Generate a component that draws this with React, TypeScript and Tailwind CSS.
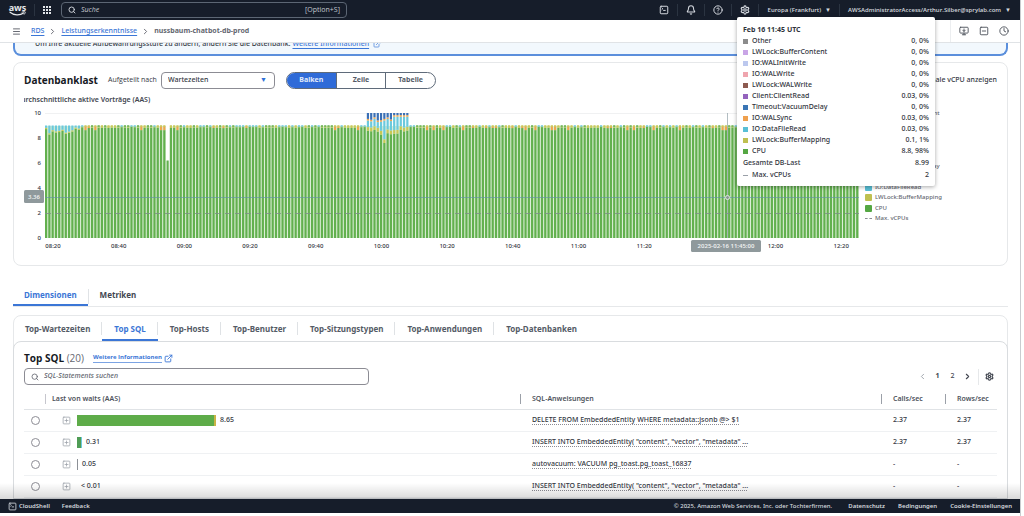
import React from "react";
import {
  Bell,
  ChevronLeft,
  ChevronRight,
  CircleHelp,
  Clock4,
  ExternalLink,
  Menu,
  MonitorDown,
  Search,
  Settings,
  SquareMinus,
  SquarePlus,
  SquareTerminal,
} from "lucide-react";

const GREEN = "#62b04e";
const YELLOW = "#c6c855";
const CYAN = "#6bc9dc";
const ORANGE = "#eda64e";
const BLUE = "#3a6fb5";

const metrics = [
  { name: "Other", value: "0, 0%", swatch: "bg-[#8c8c8c]" },
  { name: "LWLock:BufferContent", value: "0, 0%", swatch: "bg-[#c9a5e6]" },
  { name: "IO:WALInitWrite", value: "0, 0%", swatch: "bg-[#bcc8ee]" },
  { name: "IO:WALWrite", value: "0, 0%", swatch: "bg-[#efa5ae]" },
  { name: "LWLock:WALWrite", value: "0, 0%", swatch: "bg-[#8d5a50]" },
  { name: "Client:ClientRead", value: "0.03, 0%", swatch: "bg-[#9463bd]" },
  { name: "Timeout:VacuumDelay", value: "0, 0%", swatch: "bg-[#3a75b5]" },
  { name: "IO:WALSync", value: "0.03, 0%", swatch: "bg-[#efa04d]" },
  { name: "IO:DataFileRead", value: "0.03, 0%", swatch: "bg-[#58bfd6]" },
  { name: "LWLock:BufferMapping", value: "0.1, 1%", swatch: "bg-[#bfc050]" },
  { name: "CPU", value: "8.8, 98%", swatch: "bg-[#55a743]" },
];

const dimensionTabs = [
  "Top-Wartezeiten",
  "Top SQL",
  "Top-Hosts",
  "Top-Benutzer",
  "Top-Sitzungstypen",
  "Top-Anwendungen",
  "Top-Datenbanken",
];

const timeLabels = [
  { text: "08:20", minute: 0 },
  { text: "08:40", minute: 20 },
  { text: "09:00", minute: 40 },
  { text: "09:20", minute: 60 },
  { text: "09:40", minute: 80 },
  { text: "10:00", minute: 100 },
  { text: "10:20", minute: 120 },
  { text: "10:40", minute: 140 },
  { text: "11:00", minute: 160 },
  { text: "11:20", minute: 180 },
  { text: "12:00", minute: 220 },
  { text: "12:20", minute: 240 },
];

const statements = [
  { load: "8.65", bar: 139, kind: "cpu", sql: "DELETE FROM EmbeddedEntity WHERE metadata::jsonb @> $1", calls: "2.37", rows: "2.37" },
  { load: "0.31", bar: 5, kind: "mixed", sql: 'INSERT INTO EmbeddedEntity( "content", "vector", "metadata" ...', calls: "2.37", rows: "2.37" },
  { load: "0.05", bar: 1, kind: "line", sql: "autovacuum: VACUUM pg_toast.pg_toast_16837", calls: "-", rows: "-" },
  { load: "< 0.01", bar: 0, kind: "none", sql: 'INSERT INTO EmbeddedEntity( "content", "vector", "metadata" ...', calls: "-", rows: "-" },
];

const STEP = 3.284;
const noise = (i: number) => {
  const v = Math.sin(i * 12.9898) * 43758.5453;
  return v - Math.floor(v);
};

type Segment = { from: number; to: number; color: string };

function segmentsFor(i: number): Segment[] {
  const n = noise(i + 1);
  if (i === 37) return [{ from: 0, to: 6.2, color: GREEN }];
  if (i >= 98 && i <= 110) {
    const green = i === 103 ? 7.6 : 8.5 - (i > 101 && i < 108 ? 0.25 : 0) + n * 0.15;
    const mid = green + 0.3;
    const top = i < 106 ? 9.25 + n * 0.3 : 9.7;
    return [
      { from: 0, to: green, color: GREEN },
      { from: green, to: mid, color: YELLOW },
      { from: mid, to: top, color: CYAN },
      { from: top, to: top + 0.13, color: ORANGE },
      { from: top + 0.13, to: 10, color: BLUE },
    ];
  }
  if (i < 11) {
    const green = 8.25 + n * 0.5;
    return [
      { from: 0, to: green, color: GREEN },
      { from: green, to: green + 0.1, color: YELLOW },
      { from: green + 0.1, to: 9, color: CYAN },
    ];
  }
  const green = 8.88 - (n > 0.88 ? 0.25 : n * 0.1);
  return [
    { from: 0, to: green, color: GREEN },
    { from: green, to: 8.94, color: n > 0.8 ? ORANGE : YELLOW },
    { from: 8.9, to: 9.02, color: n > 0.5 ? YELLOW : n > 0.25 ? GREEN : CYAN },
  ];
}

function LoadChart() {
  return (
    <svg viewBox="0 0 835 146" className="block w-full" role="img" aria-label="Datenbanklast">
      <line x1="21" x2="835" y1="6.5" y2="6.5" stroke="#f0f1f2" />
      <rect x="21" y="19" width="121" height="112" fill="#dcefd7" />
      <rect x="146" y="19" width="689" height="112" fill="#dcefd7" />
      {Array.from({ length: 248 }, (_, i) =>
        segmentsFor(i).map((s, k) => (
          <rect
            key={`${i}-${k}`}
            x={21 + i * STEP}
            y={131 - s.to * 12.5}
            width="2.2"
            height={(s.to - s.from) * 12.5}
            fill={s.color}
          />
        )),
      )}
      <line x1="21" x2="835" y1="90.5" y2="90.5" stroke="#5f8fa8" strokeOpacity="0.6" />
      <line x1="21" x2="835" y1="106.5" y2="106.5" stroke="#7d8f86" strokeOpacity="0.8" strokeDasharray="6 4" />
      <line x1="703.5" x2="703.5" y1="6" y2="131" stroke="#7f9199" strokeOpacity="0.6" />
      <circle cx="703.5" cy="90.5" r="2" fill="#8a9a94" stroke="#dfe8dd" />
      <g fontSize="6" fill="#33373f" fontWeight="500">
        {[0, 2, 4, 6, 8, 10].map((v) => (
          <text key={v} x="17" y={133 - v * 12.5} textAnchor="end">{v}</text>
        ))}
        {timeLabels.map((t) => (
          <text key={t.text} x={29 + t.minute * STEP} y="141" textAnchor="middle">{t.text}</text>
        ))}
      </g>
      <rect x="0" y="83" width="20" height="13" rx="1.5" fill="#8f999c" />
      <text x="10" y="92" textAnchor="middle" fontSize="6" fontWeight="600" fill="#eef0f0">3.36</text>
      <rect x="667" y="133" width="70" height="12" rx="1.5" fill="#8f999c" />
      <text x="702" y="141" textAnchor="middle" fontSize="6" fontWeight="600" fill="#eef0f0">2025-02-16 11:45:00</text>
    </svg>
  );
}

function AwsLogo() {
  return (
    <a href="#home" aria-label="aws" className="flex w-[17px] flex-col items-center text-[9px] leading-[7px] font-bold text-[#e6e8ea]">
      <span>aws</span>
      <svg viewBox="0 0 17 5" className="h-[5px] w-[17px]" fill="none" stroke="#e6e8ea" strokeLinecap="round">
        <path d="M1 1.2C5 4.6 11 4.6 14.6 2" strokeWidth="1.2" />
        <path d="M13 1.1C14.4.6 16 .5 16.2.9C16.4 1.4 15.9 2.6 15.3 3.3" strokeWidth="0.9" />
      </svg>
    </a>
  );
}

function AppGrid() {
  return (
    <button aria-label="Dienste" className="grid grid-cols-3 gap-px">
      {Array.from({ length: 9 }, (_, i) => (
        <span key={i} className="size-[2px] bg-[#e3e6ea]" />
      ))}
    </button>
  );
}

function TopBar() {
  return (
    <header className="flex h-5 shrink-0 items-center bg-[#161d2a] font-['Open_Sans','Noto_Sans',sans-serif] text-[6px] font-semibold text-[#d5d9df]">
      <div className="flex h-full items-center pl-[9px]">
        <AwsLogo />
        <span className="mx-[8px] h-3 w-px bg-[#2b3441]" />
        <AppGrid />
      </div>
      <label className="ml-[10px] flex h-4 w-[286px] items-center gap-[5px] rounded-[4px] border border-[#5c6674] px-[6px]">
        <Search size={8} strokeWidth={2.8} />
        <input aria-label="Suche" placeholder="Suche" className="min-w-0 flex-1 bg-transparent text-[7px] font-medium italic outline-none placeholder:text-[#c3c8cf]" />
        <span className="text-[7px] font-medium text-[#c3c8cf]">[Option+S]</span>
      </label>
      <div className="ml-auto flex items-center">
        <button aria-label="CloudShell"><SquareTerminal size={10} strokeWidth={2.4} /></button>
        <span className="mx-2 h-3 w-px bg-[#2b3441]" />
        <button aria-label="Benachrichtigungen"><Bell size={10} strokeWidth={2.5} /></button>
        <span className="mx-2 h-3 w-px bg-[#2b3441]" />
        <button aria-label="Hilfe"><CircleHelp size={10} strokeWidth={2.4} /></button>
        <span className="mx-2 h-3 w-px bg-[#2b3441]" />
        <button aria-label="Einstellungen"><Settings size={10} strokeWidth={2.8} /></button>
        <span className="mr-[9px] ml-2 h-3 w-px bg-[#2b3441]" />
        <button className="flex items-center gap-1">Europa (Frankfurt) <span>▼</span></button>
        <span className="mx-2 h-3 w-px bg-[#2b3441]" />
        <button className="mr-[9px] flex items-center gap-1">AWSAdministratorAccess/Arthur.Silber@sprylab.com <span>▼</span></button>
      </div>
    </header>
  );
}

function Breadcrumbs() {
  return (
    <nav className="flex h-[23px] shrink-0 items-center border-b border-[#e0e3e6] text-[7px] text-[#656871]">
      <button aria-label="Navigation" className="ml-3"><Menu size={9} strokeWidth={2.6} /></button>
      <a href="#rds" className="ml-[10px] font-medium text-[#3b76d6] underline underline-offset-2">RDS</a>
      <ChevronRight size={9} strokeWidth={2.5} className="mx-1" />
      <a href="#insights" className="font-medium text-[#3b76d6] underline underline-offset-2">Leistungserkenntnisse</a>
      <ChevronRight size={9} strokeWidth={2.5} className="mx-1" />
      <span className="font-bold">nussbaum-chatbot-db-prod</span>
      <div className="mr-[11px] ml-auto flex h-full items-center gap-[10px] border-l border-[#eceef0] pl-2 text-[#4d525b]">
        <button aria-label="Ausgabe"><MonitorDown size={10} strokeWidth={2.2} /></button>
        <button aria-label="Informationen"><SquareMinus size={10} strokeWidth={2.2} /></button>
        <button aria-label="Verlauf"><Clock4 size={10} strokeWidth={2.2} /></button>
      </div>
    </nav>
  );
}

function HoverCard() {
  return (
    <aside className="absolute top-[17px] right-[89px] w-[198px] rounded-[2px] bg-white px-[6px] pt-[7px] pb-[5px] text-[7px] font-medium text-[#2f333b] shadow-[0_1px_4px_rgba(0,0,0,0.35)]">
      <h3 className="h-[12px] leading-[11px] font-bold">Feb 16 11:45 UTC</h3>
      <ul>
        {metrics.map((m) => (
          <li key={m.name} className="flex h-[11px] items-center">
            <span className={`mr-[4px] size-[5px] ${m.swatch}`} />
            <span>{m.name}</span>
            <span className="ml-auto">{m.value}</span>
          </li>
        ))}
        <li className="flex h-[12px] items-center justify-between"><span>Gesamte DB-Last</span><span>8.99</span></li>
        <li className="flex h-[12px] items-center">
          <span className="mr-[4px] w-[5px] border-t border-dashed border-[#9aa0a8]" />
          <span>Max. vCPUs</span>
          <span className="ml-auto">2</span>
        </li>
      </ul>
    </aside>
  );
}

function LoadCard() {
  return (
    <section className="mt-[6px] rounded-[8px] border border-[#e6e8ea] px-[10px] pt-2 pb-3">
      <div className="flex h-[18px] items-center">
        <h2 className="w-[84px] font-['Open_Sans','Noto_Sans',sans-serif] text-[10px] font-bold text-[#16191f]">Datenbanklast</h2>
        <label htmlFor="slice" className="w-[53px] font-['Open_Sans','Noto_Sans',sans-serif] text-[7px] whitespace-nowrap text-[#33373f]">Aufgeteilt nach</label>
        <div className="relative flex w-[114px] items-center">
          <select id="slice" className="h-[17px] w-full appearance-none rounded-[4px] border border-[#8c8c94] bg-white pl-[6px] text-[7px] font-medium text-[#33373f]">
            <option>Wartezeiten</option>
          </select>
          <span className="pointer-events-none absolute right-2 text-[7px] text-[#2f6fd8]">▼</span>
        </div>
        <div className="ml-[11px] flex h-[17px] w-[150px] overflow-hidden rounded-full border border-[#5f6b7a] text-[7px] font-bold text-[#555b66]">
          <button className="flex-1 bg-[#2f6bd8] text-[#e3ecfb]">Balken</button>
          <button className="flex-1 border-l border-[#5f6b7a]">Zeile</button>
          <button className="flex-1 border-l border-[#5f6b7a]">Tabelle</button>
        </div>
        <span className="ml-auto text-[7px] font-medium text-[#33373f]">Maximale vCPU anzeigen</span>
      </div>
      <div className="flex h-[18px] items-end overflow-hidden pb-[2px]">
        <h3 className="-ml-[8px] text-[7px] leading-[10px] font-semibold whitespace-nowrap text-[#424650]">Durchschnittliche aktive Vorträge (AAS)</h3>
      </div>
      <div className="flex items-start gap-[6px]">
        <div className="min-w-0 flex-1"><LoadChart /></div>
        <ul className="-mt-[9px] flex h-[126px] w-[132px] shrink-0 flex-col justify-between text-[6px] text-[#656871]">
          {metrics.map((m) => (
            <li key={m.name} className="flex h-[10px] items-center gap-[3px] font-medium">
              <span className={`size-[7px] rounded-[1px] ${m.swatch}`} />
              {m.name}
            </li>
          ))}
          <li className="flex h-[10px] items-center gap-[3px] font-medium">
            <span className="w-[7px] border-t border-dashed border-[#8c8c94]" />
            Max. vCPUs
          </li>
        </ul>
      </div>
    </section>
  );
}

function StatementTable() {
  return (
    <table className="mt-[4px] w-full table-fixed border-collapse text-left text-[7px] font-medium text-[#33373f]">
      <colgroup>
        <col className="w-[21px]" />
        <col />
        <col className="w-[361px]" />
        <col className="w-[64px]" />
        <col className="w-[52px]" />
      </colgroup>
      <thead>
        <tr className="h-[20px] border-b border-[#e0e3e6] text-[#4d525b]">
          <td />
          <th className="font-semibold"><div className="border-l border-[#c6c6cd] pl-[6px]">Last von waits (AAS)</div></th>
          <th className="font-semibold"><div className="border-l border-[#9ba0a8] pl-[11px]">SQL-Anweisungen</div></th>
          <th className="font-semibold"><div className="border-l border-[#9ba0a8] pl-[11px]">Calls/sec</div></th>
          <th className="font-semibold"><div className="border-l border-[#9ba0a8] pl-[11px]">Rows/sec</div></th>
        </tr>
      </thead>
      <tbody>
        {statements.map((s, i) => (
          <tr key={i} className="h-[22px] border-b border-[#eff1f3]">
            <td className="pl-[7px]">
              <input type="radio" name="statement" aria-label={s.sql} className="block size-[9px] appearance-none rounded-full border border-[#8c8c94] bg-white" />
            </td>
            <td>
              <div className="flex items-center pl-[17px]">
                <button aria-label="Erweitern" className="mr-[6px] text-[#9ba0a8]"><SquarePlus size={9} /></button>
                <span
                  style={{ width: s.bar }}
                  className={`h-[11px] ${s.kind === "cpu" ? "border-r-2 border-[#c9b445] bg-[#5eac49]" : s.kind === "mixed" ? "border-r border-[#6bc9dc] bg-[#4f9c55]" : "bg-[#8c9096]"}`}
                />
                <span className="ml-[4px]">{s.load}</span>
              </div>
            </td>
            <td className="pl-[12px]">
              <span className="underline decoration-[#8c8c94] decoration-dotted underline-offset-2">{s.sql}</span>
            </td>
            <td className="pl-[12px]">{s.calls}</td>
            <td className="pl-[12px]">{s.rows}</td>
          </tr>
        ))}
      </tbody>
    </table>
  );
}

function SqlPanel() {
  return (
    <section className="mt-2 rounded-t-[8px] border border-[#e6e8ea]">
      <nav className="flex h-[25px] items-center text-[8px] font-bold text-[#555b66]">
        {dimensionTabs.map((t, i) => (
          <button
            key={t}
            className={`relative flex h-full items-center border-b-2 px-[12px] pt-[2px] whitespace-nowrap first:pl-[11px] ${i === 1 ? "border-[#3b76d6] text-[#3b76d6]" : "border-transparent"}`}
          >
            {t}
            {i < dimensionTabs.length - 1 && <span className="absolute top-[6px] right-0 h-[13px] w-px bg-[#dfe2e5]" />}
          </button>
        ))}
      </nav>
      <div className="-mx-px rounded-t-[8px] border border-[#d9dcdf] px-[10px] pt-[9px]">
        <div className="flex h-[14px] items-center gap-[9px] font-['Open_Sans','Noto_Sans',sans-serif]">
          <h2 className="text-[10px] font-bold text-[#16191f]">Top SQL <span className="font-normal text-[#656871]">(20)</span></h2>
          <a href="#info" className="flex items-center gap-[2px] text-[6px] font-bold text-[#3b76d6]">
            <span className="border-b border-[#7ba3e3]">Weitere Informationen</span>
            <ExternalLink size={9} strokeWidth={2.4} />
          </a>
        </div>
        <div className="mt-[3px] flex items-center">
          <label className="flex h-[17px] w-[345px] items-center gap-[5px] rounded-[4px] border border-[#8c8c94] px-[6px] text-[#656871]">
            <Search size={8} strokeWidth={2.5} />
            <input aria-label="SQL-Statements suchen" placeholder="SQL-Statements suchen" className="min-w-0 flex-1 text-[7px] font-medium italic outline-none placeholder:text-[#656871]" />
          </label>
          <div className="mr-[3px] ml-auto flex items-center text-[7px] text-[#424650]">
            <button aria-label="Zurück" className="text-[#9ba0a8]"><ChevronLeft size={9} strokeWidth={2.4} /></button>
            <button className="ml-2 w-[5px] font-bold">1</button>
            <button className="ml-[10px] w-[5px] font-medium">2</button>
            <button aria-label="Weiter" className="ml-2"><ChevronRight size={9} strokeWidth={3} /></button>
            <span className="mx-[6px] h-4 w-px bg-[#e6e8ea]" />
            <button aria-label="Einstellungen"><Settings size={9} strokeWidth={3.2} /></button>
          </div>
        </div>
        <StatementTable />
      </div>
    </section>
  );
}

function Footer() {
  return (
    <footer className="mb-[3px] flex h-[14px] shrink-0 items-center bg-[#161d2a] px-2 text-[6px] font-semibold text-[#d5d9df]">
      <button className="flex items-center gap-[2px]"><SquareTerminal size={9} strokeWidth={2.2} />CloudShell</button>
      <button className="ml-[12px]">Feedback</button>
      <span className="ml-auto font-medium">© 2025, Amazon Web Services, Inc. oder Tochterfirmen.</span>
      <a href="#privacy" className="ml-4">Datenschutz</a>
      <a href="#terms" className="ml-[13px]">Bedingungen</a>
      <a href="#cookies" className="ml-[13px]">Cookie-Einstellungen</a>
    </footer>
  );
}

export default function App() {
  return (
    <div className="relative h-screen overflow-hidden bg-white pr-[3px] font-['Noto_Sans','Open_Sans',sans-serif]">
      <div className="flex h-full flex-col border-r border-[#c9ccd0]">
        <TopBar />
        <Breadcrumbs />
        <main className="relative min-h-0 flex-1 overflow-hidden pr-3 pl-[13px]">
          <div className="-mt-[6px] flex h-[19px] items-start rounded-b-[8px] border-2 border-t-0 border-[#5b8fdc] bg-[#f2f8fd] pl-5 text-[7px] leading-[13px] font-medium text-[#33373f]">
            Um Ihre aktuelle Aufbewahrungsstufe zu ändern, ändern Sie die Datenbank.
            <a href="#retention" className="ml-[2px] flex items-center gap-1 text-[#3b76d6] underline underline-offset-2">
              Weitere Informationen <ExternalLink size={8} />
            </a>
          </div>
          <LoadCard />
          <nav className="mt-[19px] flex h-[22px] items-stretch border-b border-[#e6e8ea] text-[8px] font-bold text-[#424650]">
            <button className="border-b-2 border-[#3b76d6] px-[11px] text-[#3b76d6]">Dimensionen</button>
            <span className="mt-1 h-[15px] w-px bg-[#e0e3e6]" />
            <button className="border-b-2 border-transparent px-[11px]">Metriken</button>
          </nav>
          <SqlPanel />
          <div className="pointer-events-none absolute inset-x-0 bottom-0 h-4 bg-linear-to-t from-black/15 to-transparent" />
        </main>
        <Footer />
      </div>
      <HoverCard />
    </div>
  );
}
